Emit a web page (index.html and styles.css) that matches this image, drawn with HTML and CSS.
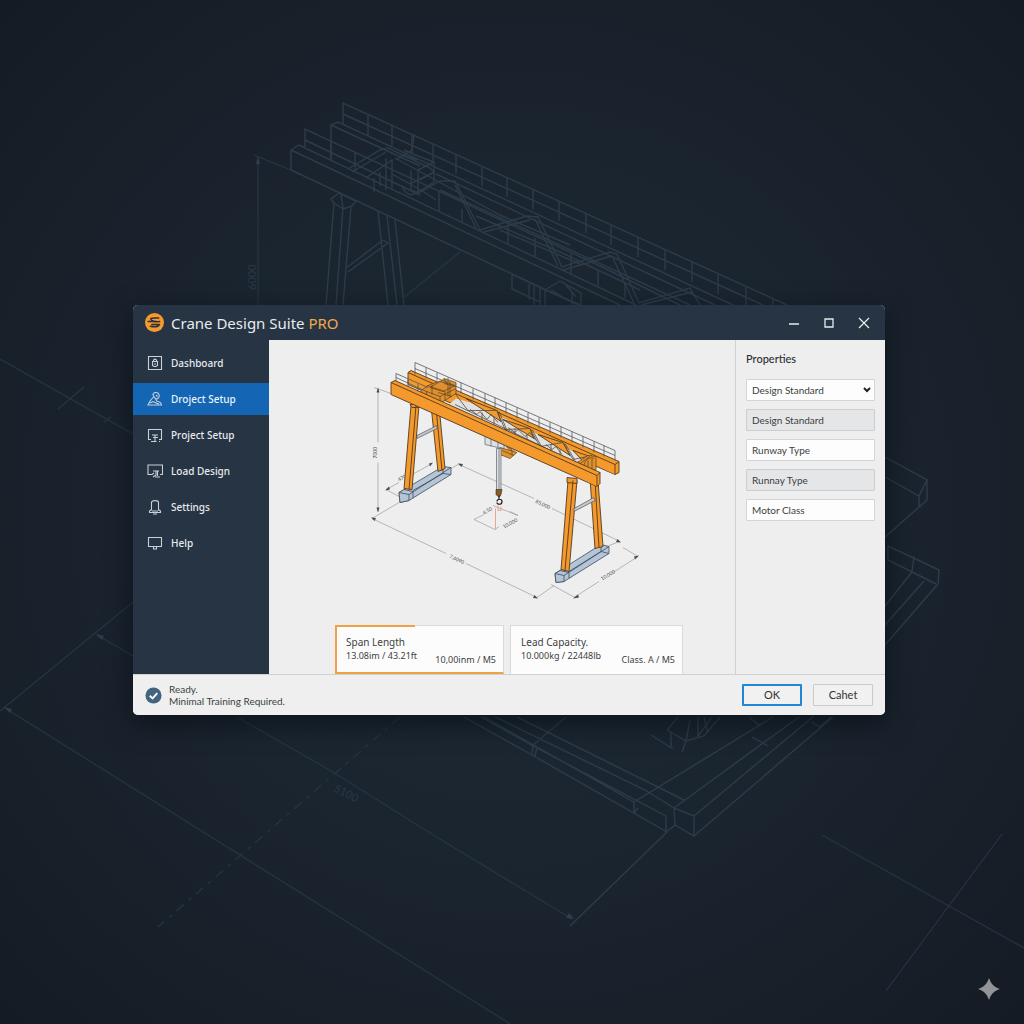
FILE: index.html
```html
<!DOCTYPE html>
<html lang="en">
<head>
<meta charset="utf-8">
<meta name="viewport" content="width=device-width, initial-scale=1">
<title>Crane Design Suite PRO</title>
<link rel="stylesheet" href="styles.css">
</head>
<body>
<svg class="backdrop" viewBox="0 0 1024 1024" preserveAspectRatio="xMidYMid slice" aria-hidden="true">
  <!-- gantry girders -->
  <g class="bp">
    <path d="M291 150V170L578 305M291 150L620 305M291 150L299 145L636 305"/>
    <path d="M331 160V125L338 122L733 305M331 125L420 166M436 174L715 305M440 190L690 305"/>
    <path d="M343 124V103L787 305M343 114L763 305"/>
    <path d="M368 115V135M392 125V146M412 135V154M433 144V163M456 154V174M482 166V186M507 177V197M533 190V209M559 201V221M586 213V233M611 225V245M638 237V257M665 250V270M692 262V282M718 274V294M746 287V305M773 299V305"/>
    <path d="M305 147V129L600 266L680 305M305 140L420 195M331 143V160M355 152V172M439 192V212M462 209V222M508 222V243M535 238V256M571 254V274M598 270V286M625 284V298"/>
    <path d="M348 169L380 150L388 148L430 168L434 172L410 184L392 174M352 172L386 152M366 178L392 160V188M374 178V192M380 172V186M386 158V190M396 160L412 150L414 134M400 154L418 160M418 193V170L434 162V182L417 193M411 170V190L418 193M404 150L418 156L434 162M420 180L433 173M396 176L424 192L436 200M402 186C406 196 412 196 418 192L432 184"/>
    <path d="M417 194L440 181L455 181L480 230L527 216L538 217L562 267L610 252L617 254L639 303L690 288L700 305M455 185L476 228M484 232L530 220M535 219L558 266M563 270L612 256M612 256L634 303M641 305L692 292"/>
    <path d="M476 216L560 252L640 290M500 230L580 264M395 158L500 215L570 245"/>
    <path d="M334 203L326 305M343 207L336 305M351 207L343 305M334 203L331 199L339 193L356 201L352 206L343 209L334 203M341 195L343 208M378 211L388 305M387 216L397 305M395 220L404 305M346 268L383 240L388 243L348 272"/>
    <path d="M512 274V289L540 302M512 274L545 290L560 281L581 293V305M529 284V300M534 286V305M540 288V305M545 290V305M545 290L581 305M551 290L568 300M566 285L576 297M572 291V305"/>
  </g>
  <!-- runway rails -->
  <g class="bp">
    <path d="M464 717L532 755L667 832M481 717L533 746L666 816M484 717L634 802M517 717L684 800M495 717L645 790L674 808M566 717L533 745L532 755M537 747L535 756M634 802V813L638 808M666 816V832L675 825L674 808L694 816V836L675 825M634 802L773 717M674 808L799 717M694 816L814 716M694 836L833 717M752 737L768 746M811 722L820 727L831 717M749 717L760 726M667 832L570 926"/>
    <path d="M667 730L686 741L682 752M651 735L673 749M671 732V748M690 720L686 741L704 736L720 717M698 717V736L712 717M667 730L678 717M704 717L708 733"/>
    <path d="M885 457L927 480V500L885 537M885 477L919 496L927 480M919 496V506M888 546L939 570L938 584L885 645M888 546V560L912 572L914 556M912 572L936 584M885 606L912 572M885 625L924 581"/>
  </g>
  <!-- dimension lines -->
  <g class="bp thin">
    <path d="M258 157V305M254 155L291 170M403 298L460 252M0 359L133 434M58 409L84 387M104 422L111 417M133 602L0 711M97 635L133 656M5 708L240 855L480 1005L510 1024M237 717L333 772L430 833L572 919M822 835L1024 948M1002 834L886 991"/>
    <path d="M400 717L158 927" stroke-dasharray="10 6 4 6"/>
  </g>
  <path class="bp-arrow" d="M258 156l-2 8h4zM4 707l8 2l-2 4zM96 634l8 2l-2 4zM574 919l-8-1l3-5z"/>
  <text class="bp-text" transform="translate(256 290) rotate(-90)">6000</text>
  <text class="bp-text" transform="translate(333 791) rotate(26)">5100</text>
  <path class="spark" d="M989 978C991 984 994 987 1000 989C994 991 991 994 989 1000C987 994 984 991 978 989C984 987 987 984 989 978Z"/>
</svg>

<div class="desktop">
<section class="window" aria-label="Crane Design Suite PRO">
  <header class="titlebar">
    <svg class="logo" viewBox="0 0 18 18" aria-hidden="true">
      <circle cx="9" cy="9" r="9" fill="#f79a2c"/>
      <path d="M5.500 5.200C8 4.300 10 5 13 4.800M3 8C6 7.800 9 8.600 14 8M6.500 11H13.500C12.500 13.400 9 13.400 5 12.600M5.500 5.200C5 7 8 7.800 11 8" fill="none" stroke="#26323f" stroke-width="1.400" stroke-linecap="round"/>
    </svg>
    <h1 class="title">Crane Design Suite <span class="pro">PRO</span></h1>
    <div class="controls">
      <button class="control" type="button" aria-label="Minimize"><svg viewBox="0 0 12 12"><path d="M1 7H11"/></svg></button>
      <button class="control" type="button" aria-label="Maximize"><svg viewBox="0 0 12 12"><path d="M2 2H10V10H2Z"/></svg></button>
      <button class="control" type="button" aria-label="Close"><svg viewBox="0 0 12 12"><path d="M1 1L11 11M11 1L1 11"/></svg></button>
    </div>
  </header>

  <div class="content">
    <nav class="sidebar">
      <a class="item" href="#dashboard"><svg viewBox="0 0 16 16"><path d="M1.500 1.500H14.500V14.500H1.500ZM5.500 6.500H10.500V10.500L9 11.500H7L5.500 10.500ZM6.500 6V5L8 4L9.500 5V6M7 9H9"/></svg>Dashboard</a>
      <a class="item active" href="#project" aria-current="page"><svg viewBox="0 0 16 16"><path d="M6 4C6 1 11 .5 12 3.500C13 6 11 8 9 8C7.500 8 8.500 6 7 6L6 4M6.500 6L3 10L1 14H14.500C14 11 12 10.500 10 10.500L8.500 8M3 12L6 10.500L9 12L12 13M9 4L10.500 5.500"/></svg>Droject Setup</a>
      <a class="item" href="#setup"><svg viewBox="0 0 16 16"><path d="M4 12.500H1.500V2.500H14.500V12.500H12M5 8H11M8 8V14M6 10.500H11M4 14.500H9.500M12 14.500H13"/></svg>Project Setup</a>
      <a class="item" href="#load"><svg viewBox="0 0 16 16"><path d="M5 11.500H1V2H15.500V11.500H13M6 8H12M9 8V12L6 14M10.500 8V13M5 11.500L7 10M8 14H13"/></svg>Load Design</a>
      <a class="item" href="#settings"><svg viewBox="0 0 16 16"><path d="M4.500 11.500V3.500C4.500 1 11.500 1 11.500 3.500V11.500M4.500 10.500L2.500 12V13.500H13.500V12L11.500 10.500M5 12H11M6 15H10"/></svg>Settings</a>
      <a class="item" href="#help"><svg viewBox="0 0 16 16"><path d="M1.500 2.500H14.500V11.500H1.500ZM6.500 11.500V14H9.500V11.500"/></svg>Help</a>
    </nav>

    <main class="workspace">
      <svg class="drawing" viewBox="269 340 466 284" role="img" aria-label="Gantry crane drawing">
        <g class="dim">
          <path d="M378 388V442M378 462V511M374 387L391 393M372 518L446 553M466 563L537 597M459 464L534 498M552 508L620 541M386 489L399 482M407 477L432 463M574 597L599 581M613 572L638 556M474 519L495 529L499 526M474 519L484 514M510 511L518 515M551 584L575 597M623 547L638 556M537 597L554 585M372 518L399 502M386 489L399 496M451 468L460 463M609 545L620 541M493 505L518 515"/>
        </g>
        <path class="tip" d="M378 387l-1.500 5h3zM378 512l-1.500-5h3zM371 517l5 .5l-1.500 3zM538 598l-5-.5l1.500-3zM458 463l5 .5l-1.500 3zM621 542l-5-.5l1.500-3zM385 490l4-4l1 3zM433 462l-4 1l1 3zM573 598l5-4l1 3zM639 555l-5 1l1 3z"/>
        <g class="dim-text">
          <text transform="translate(377 458) rotate(-90)">7000</text>
          <text transform="translate(449 557) rotate(25)">7,6090</text>
          <text transform="translate(535 502) rotate(25)">85,000</text>
          <text transform="translate(602 580) rotate(-31)">10,000</text>
          <text transform="translate(399 481) rotate(-28)">470</text>
          <text transform="translate(484 514) rotate(-28)">6,50</text>
          <text transform="translate(504 528) rotate(-28)">10,000</text>
        </g>
        <path class="mark" d="M495.500 508V529M498 505V510H501V506"/>
        <!-- wheel bogies -->
        <g class="steel">
          <path d="M399 492L443 466L451 467V474L409 500L400 502Z"/>
          <path d="M399 492L409 494V500L400 502ZM409 494L451 467M399 492L404 489L413 491V498M443 466V473L451 474M443 473L413 490"/>
          <path d="M555 573L601 544L609 546V553L564 581L556 582Z"/>
          <path d="M555 573L564 575V581L556 582ZM564 575L609 546M555 573L560 570L569 572V578M601 544V551L609 553M601 551L569 571"/>
        </g>
        <!-- rear girder and legs -->
        <g class="beam">
          <path d="M431 405L439 405L445 468L438 471Z"/><path d="M436 407L442 470"/>
          <path d="M590 478L598 480L603 546L595 548Z"/><path d="M595 480L599 547"/>
          <path d="M408 372L411 370L619 461L619 472L615 474L408 384Z"/>
          <path d="M408 372L615 464V474M615 464L619 461"/>
        </g>
        <path class="gap" d="M456 398L470 402L496 414L590 459L582 465L480 420L448 405Z"/>
        <g class="beam">
          <path d="M466 398L497 410L501 421ZM503 419L530 428L534 438ZM538 434L563 442L570 455ZM573 450L590 456L588 466Z"/>
        </g>
        <path class="ink" d="M455 393L468 410L497 410L505 429L530 428L540 446L563 442L573 459L592 455M499 411L507 430M532 429L542 447M565 443L575 460M455 404L580 464M482 412V422M494 418V428M515 428V437M527 434V442M551 444V453M560 449V458M470 409L477 414L480 411L487 419L491 414L498 422M508 427L515 432L518 429L525 436L530 432L536 440M546 444L552 449L556 446L562 454"/>
        <!-- trolley -->
        <g class="trolley">
          <path d="M421 390L430 384L442 380L444 378L456 382V393L440 403L421 396Z"/>
          <path d="M430 387L440 381L455 385L443 391ZM424 390L440 396V402M440 396L456 388M427 385L445 391V400M432 384V394M444 378L448 385V396M450 381V397M421 394L436 399M426 391L428 398M444 383L456 386M438 392L452 396"/>
        </g>
        <g class="trolley">
          <path d="M577 462L588 455L596 456V470L586 467Z"/>
          <path d="M580 463L590 456M584 465C585 458 591 456 594 458M588 466V460M592 468V458M577 463L594 471"/>
        </g>
        <!-- front girder and legs -->
        <g class="beam">
          <path d="M411 405L419 405L412 489L404 488Z"/><path d="M416 405L409 489M410 404L412 407L419 407L420 404Z"/>
          <path d="M568 480L577 480L569 571L561 569Z"/><path d="M573 480L565 570M567 477V482L577 483V478Z"/>
        </g>
        <path class="brace" d="M417 435L437 425L437 428L417 438ZM574 508L594 497L595 500L574 511Z"/>
        <path class="hoist" d="M485 435L498 440L514 446V452L498 447L485 444ZM491 438V446M498 440V447M504 443V450"/>
        <g class="trolley"><path d="M500 447L517 452L510 458L500 454ZM506 446L512 449V455M502 450L514 455"/></g>
        <path class="hoist" d="M496.500 448H501V490H496.500ZM499 448V490"/>
        <g class="beam">
          <path d="M391 382L395 380L600 472V483L597 486L391 394Z"/>
          <path d="M391 382L597 475V486M597 475L600 472"/>
        </g>
        <path class="hook-block" d="M496 489H502L501 494L500 496H498L496 494Z"/>
        <path class="hook" d="M499 495V499M497 501C497 498 502 498 502 501C502 505 497 504 497 502"/>
        <!-- hand rails -->
        <path class="rail" d="M415 374V362L615 450V460M415 368L615 455M426 367V378M437 372V380M448 377V382M461 382V393M473 388V399M485 393V404M495 397V408M506 402V413M517 407V418M528 412V423M539 417V428M550 422V433M561 426V437M572 431V442M583 436V447M594 441V452M604 445V456M396 381V373L428 387M396 377L424 390M408 379V386M418 383V391"/>
      </svg>
      <div class="cards">
        <article class="card selected">
          <h2 class="card-title">Span Length</h2>
          <div class="card-row"><span>13.08im / 43.21ft</span><span class="card-note">10,00inm / M5</span></div>
        </article>
        <article class="card">
          <h2 class="card-title">Lead Capacity.</h2>
          <div class="card-row"><span>10.000kg / 22448lb</span><span class="card-note">Class. A / M5</span></div>
        </article>
      </div>
    </main>

    <aside class="properties">
      <h2 class="heading">Properties</h2>
      <div class="select-wrap">
        <select class="field" aria-label="Design Standard"><option>Design Standard</option></select>
        <svg class="chevron" viewBox="0 0 8 6" aria-hidden="true"><path d="M1 1L4 4L7 1" fill="none" stroke="#222" stroke-width="2"/></svg>
      </div>
      <input class="field muted" aria-label="Design Standard value" value="Design Standard" readonly>
      <input class="field" aria-label="Runway Type" value="Runway Type">
      <input class="field muted" aria-label="Runway Type value" value="Runnay Type" readonly>
      <input class="field" aria-label="Motor Class" value="Motor Class">
    </aside>
  </div>

  <footer class="statusbar">
    <svg class="check" viewBox="0 0 18 18" aria-hidden="true"><circle cx="9" cy="9" r="8.500" fill="#44637f"/><path d="M5 9.300L8 12L13 6.500" fill="none" stroke="#fff" stroke-width="2"/></svg>
    <p class="status">Ready.<br>Minimal Training Required.</p>
    <button class="btn primary" type="button">OK</button>
    <button class="btn" type="button">Cahet</button>
  </footer>
</section>
</div>
</body>
</html>
```
FILE: styles.css
```css
* { box-sizing: border-box; }

body {
  margin: 0;
  min-height: 100vh;
  background: radial-gradient(circle at 50% 50%, #1d2a35 0%, #1b2530 45%, #151b24 100%);
  color: #3c3f42;
  font: 11px/14px "Lato", sans-serif;
}

h1, h2, p { margin: 0; font-weight: 400; }

.backdrop {
  position: absolute;
  inset: 0;
  width: 100%;
  height: 100%;
}
.bp { fill: none; stroke: #2d3c4a; stroke-width: 1.4; }
.thin { stroke: #263543; stroke-width: 1.2; }
.bp-arrow { fill: #2c3f52; }
.bp-text { fill: #2a3947; font: 11px "Lato", sans-serif; }
.spark { fill: #929497; }

.desktop {
  position: relative;
  display: grid;
  place-items: center;
  min-height: 100vh;
  padding: 0 6px 4px 0;
}

.window {
  width: 100%;
  max-width: 752px;
  overflow: hidden;
  border-radius: 5px;
  background: #eeeeef;
  box-shadow: 0 8px 28px rgba(4, 8, 14, .6);
}

.titlebar {
  display: flex;
  align-items: center;
  height: 35px;
  padding: 0 4px 0 12px;
  background: #263443;
}
.logo { width: 19px; height: 19px; margin-right: 7px; }
.title { flex: 1; color: #e8ebee; font: 15px/20px "Noto Sans", sans-serif; }
.pro { color: #f2a84c; }
.controls { display: flex; }
.control {
  display: grid;
  place-items: center;
  width: 35px;
  height: 35px;
  padding: 0;
  border: 0;
  background: none;
}
.control svg { width: 12px; height: 12px; fill: none; stroke: #e8ebee; stroke-width: 1.3; }

.content { display: flex; min-height: 334px; }

.sidebar {
  display: flex;
  flex-direction: column;
  gap: 4px;
  width: 136px;
  padding-top: 7px;
  background: #263443;
}
.item {
  display: flex;
  align-items: center;
  gap: 8px;
  height: 32px;
  padding-left: 14px;
  color: #e6eaee;
  font: 500 10px/14px "Noto Sans", sans-serif;
  text-decoration: none;
}
.item svg { width: 16px; height: 16px; fill: none; stroke: #c9d0d7; stroke-width: 1.1; }
.active { background: #1465b4; color: #eaf2fa; }

.workspace {
  display: flex;
  flex: 1;
  flex-direction: column;
  min-width: 0;
}
.drawing { display: block; width: 100%; flex: 1; }
.drawing path { stroke-linejoin: round; }
.dim { fill: none; stroke: #8b8e91; stroke-width: .6; }
.tip { fill: #4a4d50; }
.dim-text { fill: #4a4d50; font: 5px "Lato", sans-serif; }
.mark { fill: none; stroke: #ef9a80; stroke-width: .9; }
.steel { fill: #b5c5d8; stroke: #3d4b5a; stroke-width: .8; }
.beam { fill: #f4992b; stroke: #513a20; stroke-width: .9; }
.gap { fill: #dfe1e3; }
.ink { fill: none; stroke: #554b3f; stroke-width: .8; }
.trolley { fill: #e0912f; stroke: #5e401b; stroke-width: .7; }
.brace { fill: #c5c7c9; stroke: #55585b; stroke-width: .7; }
.hoist { fill: #dce1e8; stroke: #5d6369; stroke-width: .7; }
.hook-block { fill: #8b5c22; stroke: #3b2a17; stroke-width: .6; }
.hook { fill: none; stroke: #222; stroke-width: 1.2; }
.rail { fill: none; stroke: #55585b; stroke-width: .8; }

.cards {
  display: grid;
  grid-template-columns: 169fr 173fr;
  gap: 6px;
  padding: 0 52px 0 66px;
}
.card {
  position: relative;
  height: 49px;
  padding: 9px 7px 0 10px;
  border: 1px solid #d9dadb;
  border-bottom: 0;
  background: #fcfcfc;
  font-family: "Noto Sans", sans-serif;
}
.selected {
  padding-left: 9px;
  border-left: 2px solid #f2a044;
  border-bottom: 2px solid #f2a044;
}
.selected::before {
  content: "";
  position: absolute;
  top: -1px;
  left: -2px;
  width: 80px;
  height: 2px;
  background: #f2a044;
}
.card-title { font-size: 10px; line-height: 14px; }
.card-row { display: flex; justify-content: space-between; font-size: 9px; line-height: 14px; }
.card-note { padding-top: 4px; }

.properties {
  display: flex;
  flex-direction: column;
  gap: 8px;
  width: 150px;
  padding: 11px 10px;
  border-left: 1px solid #cfd1d3;
}
.heading { margin-bottom: 4px; color: #2c2e30; font-size: 11px; line-height: 16px; font-weight: 500; }
.select-wrap { position: relative; display: flex; }
.field {
  width: 100%;
  height: 22px;
  padding: 0 5px;
  border: 1px solid #d2d4d6;
  border-radius: 1px;
  background: #fdfdfd;
  color: #3c3f42;
  font: 10px/14px "Lato", sans-serif;
  appearance: none;
}
.muted { background: #e5e6e7; border-color: #cbcdcf; }
.chevron { position: absolute; top: 8px; right: 4px; width: 8px; height: 6px; }

.statusbar {
  display: flex;
  align-items: center;
  gap: 11px;
  height: 41px;
  padding: 0 12px;
  border-top: 1px solid #cfd1d3;
  background: #efefef;
}
.check { width: 17px; height: 17px; margin-right: -4px; }
.status { flex: 1; font-size: 10px; line-height: 12px; }
.btn {
  width: 60px;
  height: 22px;
  padding: 0;
  border: 1px solid #c8cacc;
  border-radius: 1px;
  background: #f1f1f1;
  color: #333;
  font: 11px/14px "Lato", sans-serif;
}
.primary { border: 2px solid #2186d3; }
```
